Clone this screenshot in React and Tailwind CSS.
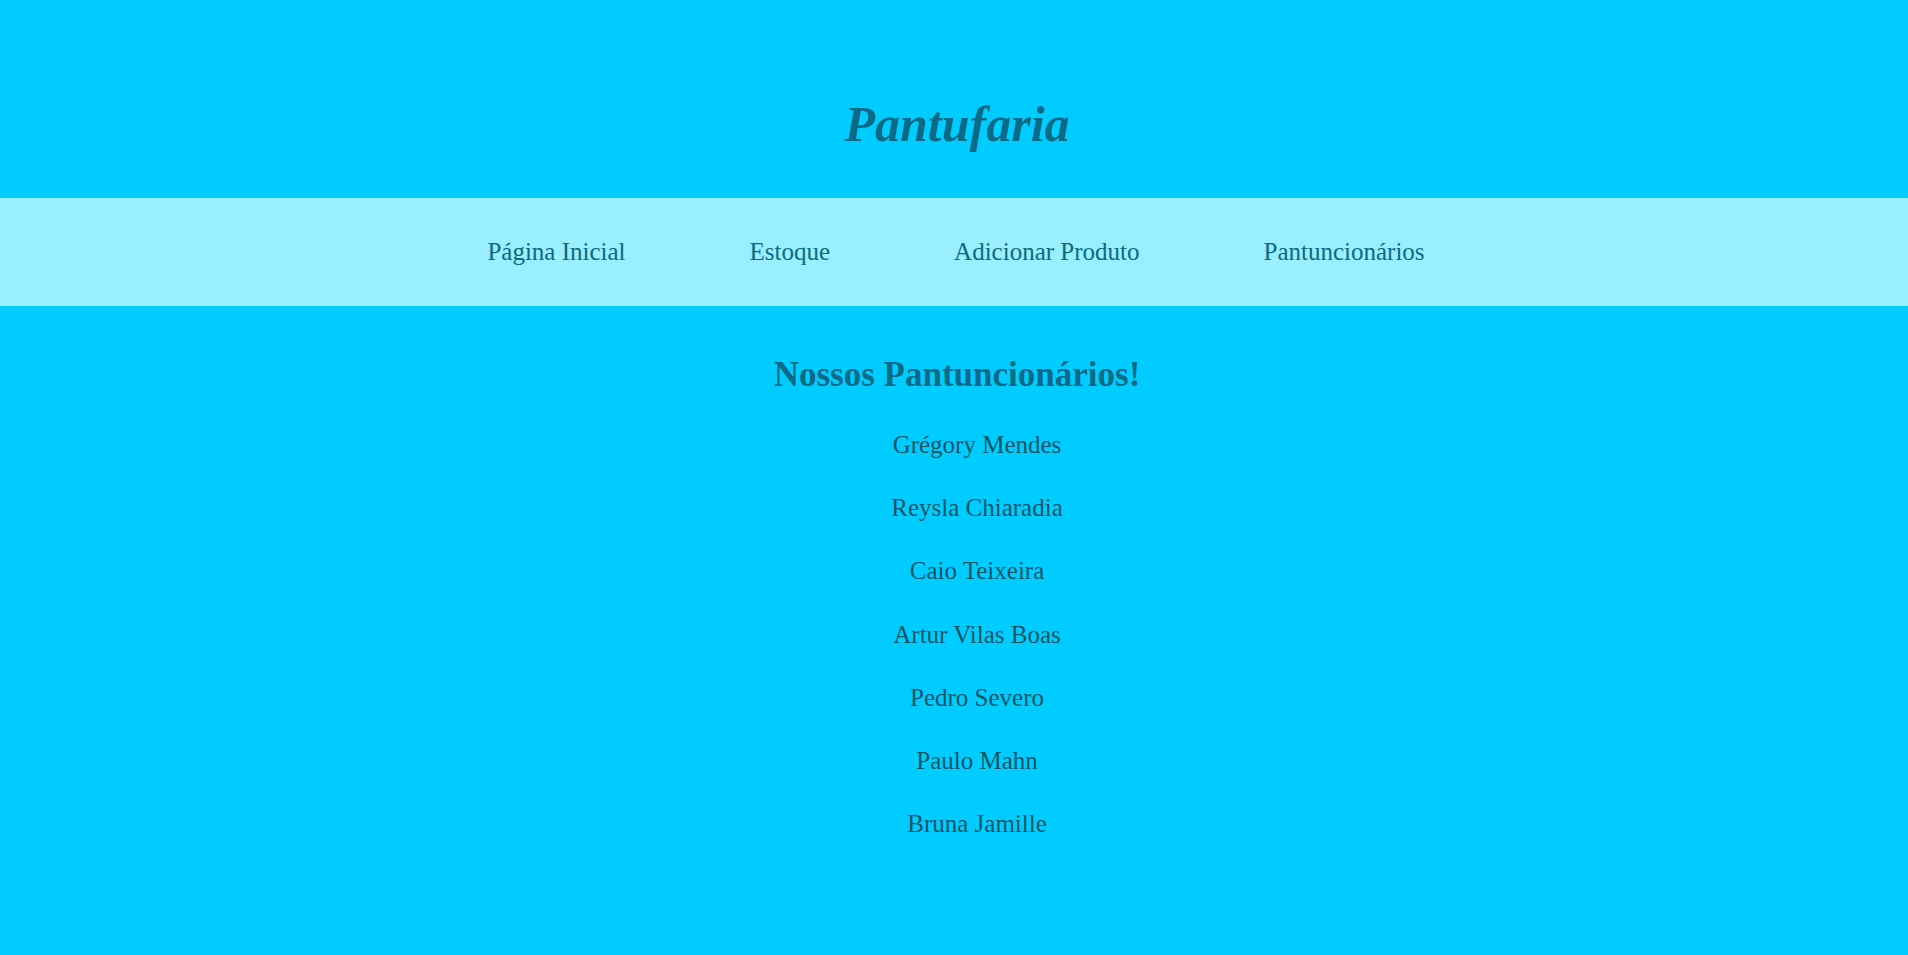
import React from "react";

const LINKS = ["Página Inicial", "Estoque", "Adicionar Produto", "Pantuncionários"];

const TEAM = [
  "Grégory Mendes",
  "Reysla Chiaradia",
  "Caio Teixeira",
  "Artur Vilas Boas",
  "Pedro Severo",
  "Paulo Mahn",
  "Bruna Jamille",
];

export default function App() {
  return (
    <div className="min-h-screen bg-[#00ccff] font-['Liberation_Serif',serif]">
      {/* Header */}
      <header className="h-[198px] pt-[97px] pl-[6px] text-center">
        <h1 className="text-[50px] leading-[1.107] font-bold italic text-[#0b6a86]">Pantufaria</h1>
      </header>

      {/* Nav */}
      <nav className="h-[108px] bg-[#99eeff] pl-[4px] flex items-center justify-center">
        <ul className="flex gap-[124px] text-[25px] leading-[1.107] text-[#0b6a80]">
          {LINKS.map((l) => (
            <li key={l}>
              <a href="#">{l}</a>
            </li>
          ))}
        </ul>
      </nav>

      {/* Team */}
      <main className="pt-[50px] pl-[6px] text-center pb-[100px]">
        <h2 className="text-[35px] leading-[1.107] font-bold text-[#0b6a86]">Nossos Pantuncionários!</h2>
        <ul className="mt-[36px] pl-[40px] flex flex-col gap-[35.6px] text-[25px] leading-[1.107] text-[#0a5566]">
          {TEAM.map((n) => (
            <li key={n}>{n}</li>
          ))}
        </ul>
      </main>
    </div>
  );
}
